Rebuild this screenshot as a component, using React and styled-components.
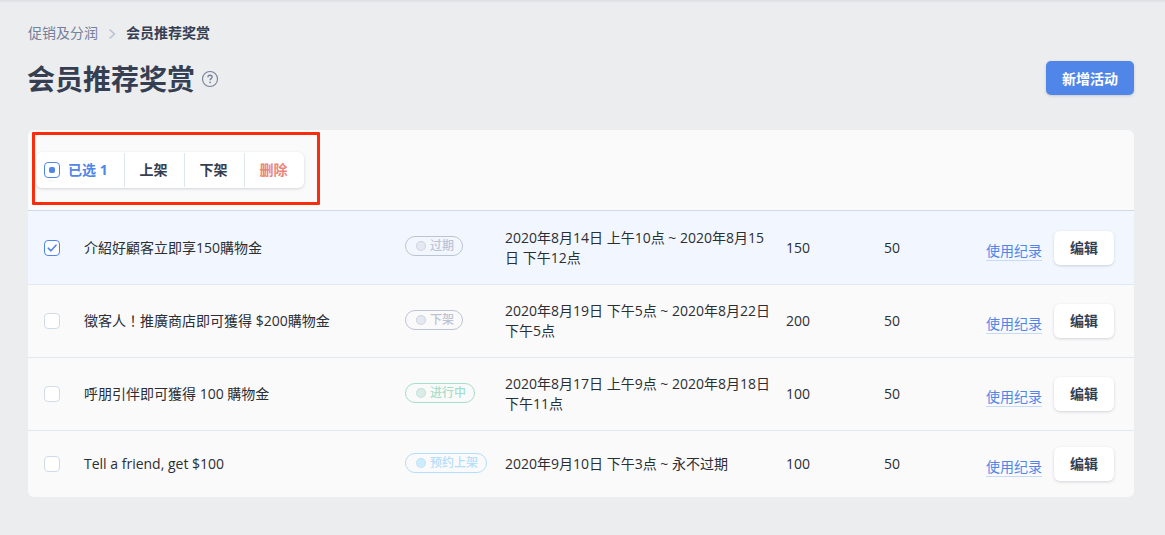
import React from 'react';
import styled, { createGlobalStyle, css } from 'styled-components';

const GlobalStyle = createGlobalStyle`
  *,
  *::before {
    box-sizing: border-box;
  }
  body {
    margin: 0;
    background: #ecedef;
    color: #2b2e33;
    font-family: 'Open Sans', 'Noto Sans CJK SC', sans-serif;
    font-size: 14px;
    line-height: 20px;
    -webkit-font-smoothing: antialiased;
  }
  button {
    font-family: inherit;
    font-size: 14px;
    line-height: 20px;
    cursor: pointer;
  }
`;

const PageStyles = styled.main`
  height: 535px;
  padding: 22px 31px 0 28px;
  background: linear-gradient(#dcdee1, #e6e7ea 2px, #ecedef 3px);
  overflow: hidden;
`;

const Breadcrumb = styled.nav`
  display: flex;
  align-items: center;
  height: 22px;
  color: #75809a;
  svg {
    margin: 1px 10px 0;
  }
  strong {
    color: #363f52;
    font-weight: 700;
  }
`;

const TitleRow = styled.header`
  display: flex;
  align-items: center;
  justify-content: space-between;
  height: 34px;
  margin-top: 17px;
`;

const Title = styled.div`
  display: flex;
  align-items: center;
  gap: 6px;
  margin: 2px 0 0 -1px;
  h1 {
    margin: 0;
    color: #363f52;
    font-size: 28px;
    font-weight: 700;
    line-height: 34px;
  }
`;

const Button = styled.button`
  height: 34px;
  padding: 0 15px;
  border: 0;
  border-radius: 6px;
  background: #fff;
  color: #363f52;
  font-weight: 700;
  box-shadow: 0 1px 3px rgba(50, 60, 80, 0.2);
  ${(props) =>
    props.$primary &&
    css`
      padding: 2px 16px 0;
      border-radius: 5px;
      background: #4f86e7;
      color: #fff;
    `}
`;

const Card = styled.section`
  position: relative;
  margin-top: 35px;
  border-radius: 6px;
  background: #fafafa;
`;

const Toolbar = styled.div`
  display: flex;
  align-items: center;
  height: 81px;
  padding-left: 8px;
  border-bottom: 1px solid #cfdae6;
`;

const BulkActions = styled.div`
  display: flex;
  height: 36px;
  padding: 1px 0;
  border-radius: 6px;
  background: #fff;
  box-shadow: 0 1px 3px rgba(50, 60, 80, 0.2);
`;

const BulkItem = styled.button`
  display: flex;
  align-items: center;
  justify-content: center;
  width: 60px;
  padding: 0 2px 0 0;
  border: 0;
  border-left: 1px solid #dfe6ef;
  background: none;
  color: ${(props) => (props.$danger ? '#e9857a' : '#363f52')};
  font-weight: 700;
`;

const Selected = styled.div`
  display: flex;
  align-items: center;
  gap: 8px;
  width: 88px;
  padding-left: 8px;
  color: #4f86e7;
  font-weight: 700;
`;

/* red frame that floats over the bulk actions */
const Highlight = styled.div`
  position: absolute;
  top: 2px;
  left: 4px;
  width: 288px;
  height: 73px;
  border: 3px solid #fb2c0c;
  border-radius: 1px;
  pointer-events: none;
`;

const Checkbox = styled.span`
  display: flex;
  align-items: center;
  justify-content: center;
  flex: none;
  width: 16px;
  height: 16px;
  border: 1px solid ${(props) => (props.$active ? '#4f86e7' : '#d0dcea')};
  border-radius: 4px;
  background: #fff;
`;

const Dot = styled.span`
  width: 6px;
  height: 6px;
  border-radius: 2px;
  background: #4f86e7;
`;

const Row = styled.div`
  display: grid;
  grid-template-columns: 40px 321px 100px 281px 98px 102px 68px 60px;
  align-items: center;
  min-height: ${(props) => props.$height}px;
  padding-left: 16px;
  background: ${(props) => (props.$checked ? '#f2f7ff' : 'transparent')};
  border-bottom: 1px solid #e2e8f1;
  &:last-child {
    border-bottom: 0;
  }
`;

const Name = styled.span`
  font-family: 'Open Sans', 'Noto Sans CJK TC', sans-serif;
`;

const Period = styled.span`
  padding-right: 12px;
`;

const tones = {
  gray: { line: '#bcc3d3', fill: '#e3e8f1' },
  green: { line: '#a4dfca', fill: '#dcebe6' },
  blue: { line: '#b4defa', fill: '#cdecfc' },
};

const Badge = styled.span`
  display: flex;
  align-items: center;
  gap: 4px;
  width: max-content;
  height: 20px;
  margin-bottom: ${(props) => props.$lift}px;
  padding: 0 8px 0 10px;
  border: 1px solid ${(props) => tones[props.$tone].line};
  border-radius: 10px;
  color: ${(props) => tones[props.$tone].line};
  font-size: 12px;
  font-weight: 500;
  line-height: 18px;
  &::before {
    content: '';
    width: 10px;
    height: 10px;
    border: 1px solid ${(props) => tones[props.$tone].line}88;
    border-radius: 50%;
    background: ${(props) => tones[props.$tone].fill};
  }
`;

const RecordLink = styled.a`
  width: max-content;
  height: 20px;
  margin-top: 6px;
  border-bottom: 1px solid #c6daf9;
  color: #4f86e7;
`;

const campaigns = [
  {
    name: '介紹好顧客立即享150購物金',
    status: '过期',
    tone: 'gray',
    period: '2020年8月14日 上午10点 ~ 2020年8月15日 下午12点',
    reward: 150,
    height: 74,
    lift: 3,
    checked: true,
  },
  {
    name: '徵客人！推廣商店即可獲得 $200購物金',
    status: '下架',
    tone: 'gray',
    period: '2020年8月19日 下午5点 ~ 2020年8月22日 下午5点',
    reward: 200,
    height: 73,
    lift: 2,
  },
  {
    name: '呼朋引伴即可獲得 100 購物金',
    status: '进行中',
    tone: 'green',
    period: '2020年8月17日 上午9点 ~ 2020年8月18日 下午11点',
    reward: 100,
    height: 73,
    lift: 2,
  },
  {
    name: 'Tell a friend, get $100',
    status: '预约上架',
    tone: 'blue',
    period: '2020年9月10日 下午3点 ~ 永不过期',
    reward: 100,
    height: 66,
    lift: 2,
  },
];

function Chevron() {
  return (
    <svg width="8" height="12" viewBox="0 0 8 12" fill="none">
      <path d="M1.5 1.5L6.5 6L1.5 10.5" stroke="#b9bfd0" strokeWidth="1.5" />
    </svg>
  );
}

function HelpIcon() {
  return (
    <svg width="18" height="18" viewBox="0 0 18 18" fill="none" stroke="#75809a">
      <circle cx="9" cy="9" r="7.5" strokeWidth="1.1" />
      <path
        d="M6.9 7.3C6.9 6 7.8 5.3 9 5.3C10.2 5.3 11.1 6 11.1 7.1C11.1 8.6 9.1 8.6 9.1 10.3"
        strokeWidth="1.4"
      />
      <circle cx="9.1" cy="12.3" r="0.9" fill="#75809a" stroke="none" />
    </svg>
  );
}

function CheckIcon() {
  return (
    <svg width="14" height="14" viewBox="0 0 14 14" fill="none">
      <path
        d="M3.2 7.2L6 9.8L11 4.2"
        stroke="#4f86e7"
        strokeWidth="1.6"
        strokeLinecap="round"
        strokeLinejoin="round"
      />
    </svg>
  );
}

function CampaignRow({ item }) {
  return (
    <Row $height={item.height} $checked={item.checked}>
      <Checkbox $active={item.checked}>{item.checked && <CheckIcon />}</Checkbox>
      <Name>{item.name}</Name>
      <Badge $tone={item.tone} $lift={item.lift}>
        {item.status}
      </Badge>
      <Period>{item.period}</Period>
      <span>{item.reward}</span>
      <span>50</span>
      <RecordLink>使用纪录</RecordLink>
      <Button>编辑</Button>
    </Row>
  );
}

export default function App() {
  return (
    <PageStyles>
      <GlobalStyle />
      <Breadcrumb>
        <span>促销及分润</span>
        <Chevron />
        <strong>会员推荐奖赏</strong>
      </Breadcrumb>
      <TitleRow>
        <Title>
          <h1>会员推荐奖赏</h1>
          <HelpIcon />
        </Title>
        <Button $primary>新增活动</Button>
      </TitleRow>
      <Card>
        <Toolbar>
          <BulkActions>
            <Selected>
              <Checkbox $active>
                <Dot />
              </Checkbox>
              <span>已选 1</span>
            </Selected>
            <BulkItem>上架</BulkItem>
            <BulkItem>下架</BulkItem>
            <BulkItem $danger>删除</BulkItem>
          </BulkActions>
          <Highlight />
        </Toolbar>
        {campaigns.map((item) => (
          <CampaignRow key={item.name} item={item} />
        ))}
      </Card>
    </PageStyles>
  );
}
